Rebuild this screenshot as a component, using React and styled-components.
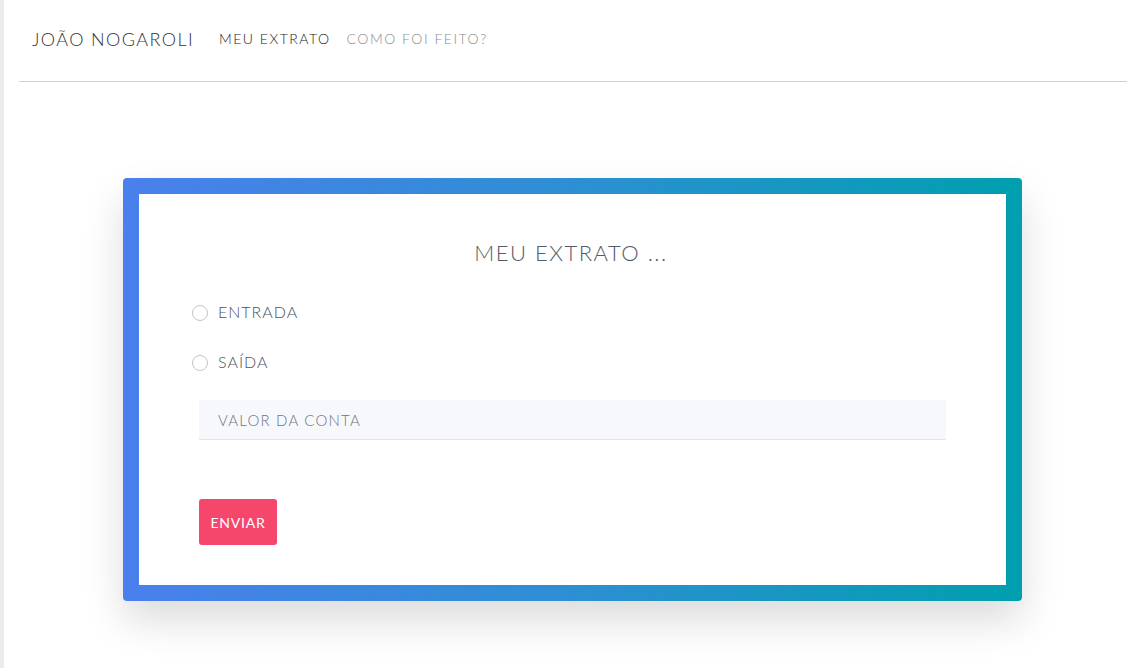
import React from 'react';
import styled, { createGlobalStyle } from "styled-components";

const GlobalStyle = createGlobalStyle`
    body {
        margin: 0;
        background: #fff;
        font-family: Lato, "Noto Sans", sans-serif;
        border-left: 4px solid #ebebeb;
        min-height: 668px;
        box-sizing: border-box;
    }
`;

const Header = styled.header`
    display: flex;
    align-items: center;
    gap: 25px;
    margin: 0 10px 0 15px;
    height: 81px;
    padding: 0 13px;
    border-bottom: 1px solid #cfcfcf;
    box-sizing: content-box;
`;

const Brand = styled.span`
    font-size: 18px;
    font-weight: 300;
    letter-spacing: 1.4px;
    color: #333;
    margin-top: -4px;
`;

const Nav = styled.nav`
    display: flex;
    gap: 16px;
    margin-top: -5px;
`;

const NavLink = styled.a`
    font-size: 14px;
    font-weight: 300;
    letter-spacing: 1.5px;
    color: ${p => (p.$active ? "#222" : "#8a8a8a")};
    text-decoration: none;
    cursor: pointer;
`;

const Main = styled.main`
    display: flex;
    justify-content: center;
    padding-top: 96px;
    padding-left: 4px;
`;

const Card = styled.div`
    width: 899px;
    padding: 16px;
    box-sizing: border-box;
    border-radius: 4px;
    background: linear-gradient(90deg, #4a80ec 0%, #2d8fd3 50%, #009faf 100%);
    box-shadow: 0 20px 40px rgba(0, 0, 0, 0.14);
`;

const Inner = styled.form`
    background: #fff;
    height: 391px;
    box-sizing: border-box;
    padding: 45px 60px 0 53px;
`;

const Title = styled.h2`
    margin: 0 0 32px;
    text-align: center;
    font-size: 22px;
    font-weight: 300;
    letter-spacing: 1.5px;
    color: #535c69;
    padding-left: 4px;
`;

const RadioRow = styled.label`
    display: flex;
    align-items: center;
    gap: 10px;
    height: 26px;
    margin-bottom: 24px;
    font-size: 16px;
    font-weight: 300;
    letter-spacing: 1px;
    color: #4d5360;
    cursor: pointer;
`;

const Circle = styled.span`
    width: 14px;
    height: 14px;
    border: 1.5px solid #c4c4c4;
    border-radius: 50%;
    margin: 4px 0 0 0;
`;

const Field = styled.input`
    display: block;
    margin: 26px 0 0 7px;
    width: 747px;
    height: 40px;
    box-sizing: border-box;
    border: none;
    border-bottom: 1px solid #e1e5eb;
    background: #f7f8fb;
    padding: 0 19px;
    font-family: Lato, "Noto Sans", sans-serif;
    font-size: 15px;
    font-weight: 300;
    letter-spacing: 1.2px;
    outline: none;

    &::placeholder {
        color: #6f7581;
    }
`;

const Button = styled.button`
    display: block;
    margin: 59px 0 0 7px;
    width: 78px;
    height: 46px;
    border: none;
    border-radius: 3px;
    background: #f5466c;
    color: #fff;
    font-family: Lato, "Noto Sans", sans-serif;
    font-size: 14px;
    font-weight: 400;
    letter-spacing: 0.8px;
    cursor: pointer;
`;

function App() {
    return (
        <>
            <GlobalStyle />
            <Header>
                <Brand>JOÃO NOGAROLI</Brand>
                <Nav>
                    <NavLink $active>MEU EXTRATO</NavLink>
                    <NavLink>COMO FOI FEITO?</NavLink>
                </Nav>
            </Header>
            <Main>
                <Card>
                    <Inner onSubmit={e => e.preventDefault()}>
                        <Title>MEU EXTRATO ...</Title>
                        <RadioRow>
                            <Circle />
                            ENTRADA
                        </RadioRow>
                        <RadioRow>
                            <Circle />
                            SAÍDA
                        </RadioRow>
                        <Field placeholder="VALOR DA CONTA" />
                        <Button type="submit">ENVIAR</Button>
                    </Inner>
                </Card>
            </Main>
        </>
    );
}

export default App;
